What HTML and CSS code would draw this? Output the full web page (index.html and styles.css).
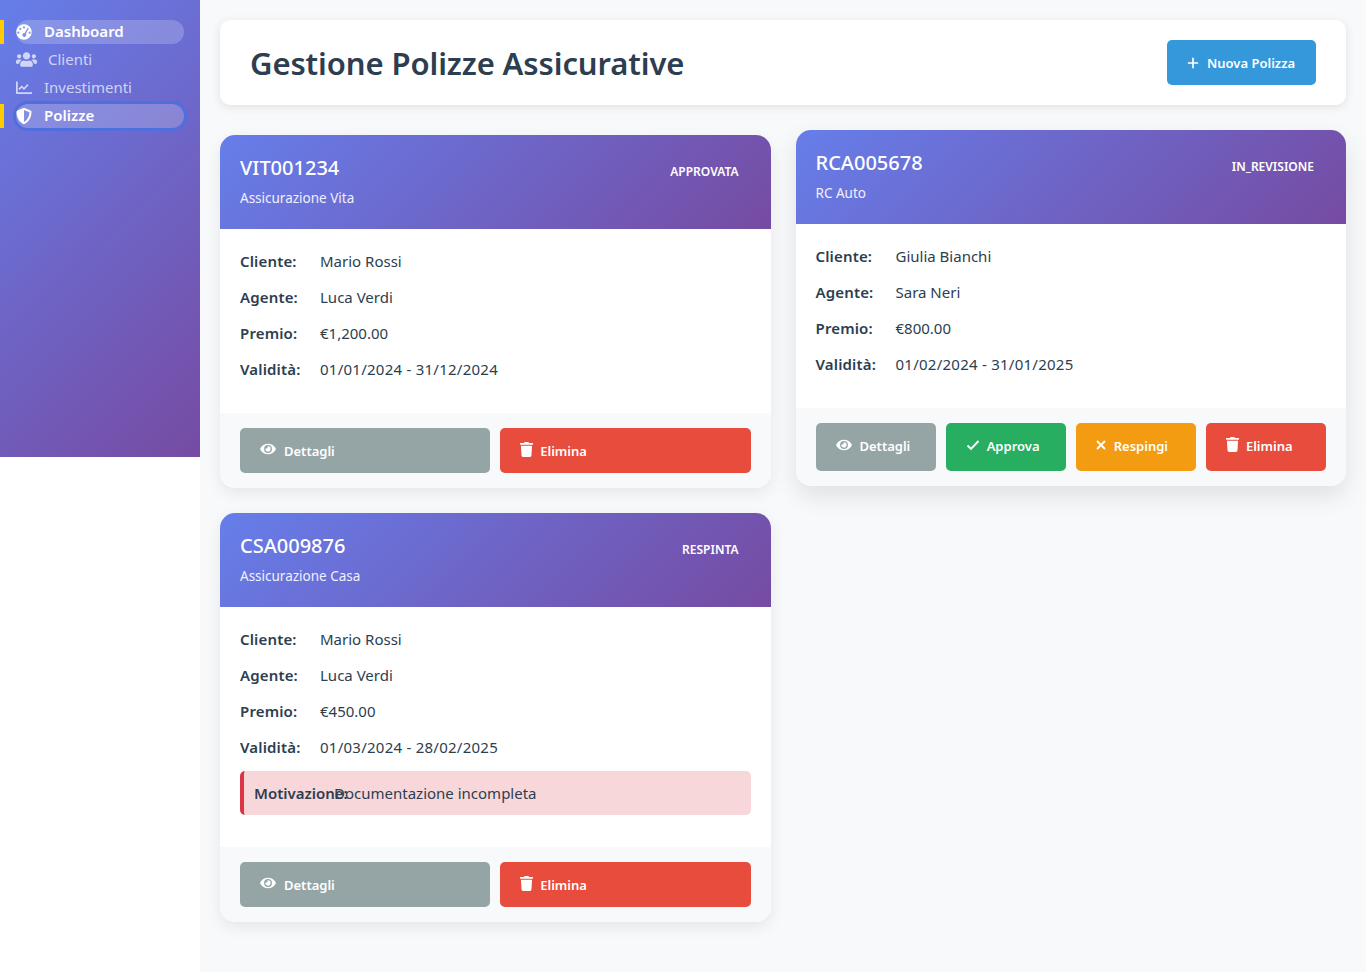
FILE: index.html
```html
<!DOCTYPE html>
<html lang="it">
<head>
<meta charset="utf-8">
<title>Gestione Polizze Assicurative</title>
<link rel="stylesheet" href="styles.css">
</head>
<body>
<svg class="defs" width="0" height="0" aria-hidden="true">
  <symbol id="i-eye" viewBox="0 0 576 512"><path d="M572.52 241.4C518.29 135.59 410.93 64 288 64S57.68 135.64 3.48 241.41a32.35 32.35 0 0 0 0 29.19C57.71 376.41 165.07 448 288 448s230.32-71.64 284.52-177.41a32.35 32.35 0 0 0 0-29.19zM288 400a144 144 0 1 1 144-144 143.93 143.93 0 0 1-144 144zm0-240a95.31 95.31 0 0 0-25.31 3.79 47.85 47.85 0 0 1-66.9 66.9A95.78 95.78 0 1 0 288 160z"/></symbol>
  <symbol id="i-trash" viewBox="0 0 448 512"><path d="M432 32H312l-9.4-18.7A24 24 0 0 0 281.1 0H166.8a23.72 23.72 0 0 0-21.4 13.3L136 32H16A16 16 0 0 0 0 48v32a16 16 0 0 0 16 16h416a16 16 0 0 0 16-16V48a16 16 0 0 0-16-16zM53.2 467a48 48 0 0 0 47.9 45h245.8a48 48 0 0 0 47.9-45L416 128H32z"/></symbol>
  <symbol id="i-check" viewBox="0 0 14 14"><path class="thin" d="M1.5 7.5l3.5 3.5 7.5-8"/></symbol>
  <symbol id="i-times" viewBox="0 0 10 14"><path class="thin" d="M1 3l8 8M9 3l-8 8"/></symbol>
</svg>
<div class="app">
  <aside class="sidebar">
    <nav class="nav">
      <a class="nav-item active">
        <svg class="nav-icon" viewBox="0 0 512 512"><path fill-rule="evenodd" d="M256 8a248 248 0 1 0 0 496 248 248 0 0 0 0-496zM256 72a36 36 0 1 1 0 72 36 36 0 0 1 0-72zM136 120a36 36 0 1 1 0 72 36 36 0 0 1 0-72zM76 240a36 36 0 1 1 0 72 36 36 0 0 1 0-72zM376 116l36 22-96 170a64 64 0 1 1-40-22zM436 240a36 36 0 1 1 0 72 36 36 0 0 1 0-72z"/></svg>
        <span class="nav-label">Dashboard</span>
      </a>
      <a class="nav-item">
        <svg class="nav-icon wide" viewBox="0 0 640 512"><path d="M96 224c35.3 0 64-28.7 64-64s-28.7-64-64-64-64 28.7-64 64 28.7 64 64 64zm448 0c35.3 0 64-28.7 64-64s-28.7-64-64-64-64 28.7-64 64 28.7 64 64 64zm32 32h-64c-17.6 0-33.5 7.1-45.1 18.6 40.3 22.1 68.9 62 75.1 109.4h66c17.7 0 32-14.3 32-32v-32c0-35.3-28.7-64-64-64zm-256 0c61.9 0 112-50.1 112-112S381.9 32 320 32 208 82.1 208 144s50.1 112 112 112zm76.8 32h-8.3c-20.8 10-43.9 16-68.5 16s-47.6-6-68.5-16h-8.3C179.6 288 128 339.6 128 403.2V432c0 26.5 21.5 48 48 48h288c26.5 0 48-21.5 48-48v-28.8c0-63.6-51.6-115.2-115.2-115.2zm-223.7-13.4C161.5 263.1 145.6 256 128 256H64c-35.3 0-64 28.7-64 64v32c0 17.7 14.3 32 32 32h65.9c6.3-47.4 34.9-87.3 75.2-109.4z"/></svg>
        <span class="nav-label">Clienti</span>
      </a>
      <a class="nav-item">
        <svg class="nav-icon" viewBox="0 0 512 512"><path d="M512 392v56H32a32 32 0 0 1-32-32V48h56v344zM112 320l-38-38 110-110 72 72 108-116 38 38-146 154-72-72z"/></svg>
        <span class="nav-label">Investimenti</span>
      </a>
      <a class="nav-item active focused">
        <svg class="nav-icon" viewBox="0 0 512 512"><path d="M466.5 83.7l-192-80a48.15 48.15 0 0 0-36.9 0l-192 80C27.7 91.1 16 108.6 16 128c0 198.5 114.5 335.7 221.5 380.3 11.8 4.9 25.1 4.9 36.9 0C360.1 472.6 496 349.3 496 128c0-19.4-11.7-36.9-29.5-44.3zM256.1 446.3l-.1-381 175.9 73.3c-3.3 151.4-82.1 261.1-175.8 307.7z"/></svg>
        <span class="nav-label">Polizze</span>
      </a>
    </nav>
  </aside>
  <main class="main">
    <header class="page-header">
      <h1 class="page-title">Gestione Polizze Assicurative</h1>
      <button class="btn btn-blue btn-new">
        <svg class="btn-icon" viewBox="0 0 14 14"><path d="M6 1h2v5h5v2H8v5H6V8H1V6h5z"/></svg>
        <span>Nuova Polizza</span>
      </button>
    </header>
    <section class="grid">
      <article class="card">
        <div class="card-head">
          <div><h2 class="card-id">VIT001234</h2><p class="card-type">Assicurazione Vita</p></div>
          <span class="status">APPROVATA</span>
        </div>
        <div class="card-body">
          <div class="row"><b>Cliente:</b><span>Mario Rossi</span></div>
          <div class="row"><b>Agente:</b><span>Luca Verdi</span></div>
          <div class="row"><b>Premio:</b><span>€1,200.00</span></div>
          <div class="row"><b>Validità:</b><span class="date">01/01/2024 - 31/12/2024</span></div>
        </div>
        <div class="card-foot">
          <button class="btn btn-grey"><svg class="btn-icon eye"><use href="#i-eye"/></svg><span>Dettagli</span></button>
          <button class="btn btn-red"><svg class="btn-icon trash"><use href="#i-trash"/></svg><span>Elimina</span></button>
        </div>
      </article>
      <article class="card lifted">
        <div class="card-head">
          <div><h2 class="card-id">RCA005678</h2><p class="card-type">RC Auto</p></div>
          <span class="status">IN_REVISIONE</span>
        </div>
        <div class="card-body">
          <div class="row"><b>Cliente:</b><span>Giulia Bianchi</span></div>
          <div class="row"><b>Agente:</b><span>Sara Neri</span></div>
          <div class="row"><b>Premio:</b><span>€800.00</span></div>
          <div class="row"><b>Validità:</b><span class="date">01/02/2024 - 31/01/2025</span></div>
        </div>
        <div class="card-foot tall">
          <button class="btn btn-grey"><svg class="btn-icon eye"><use href="#i-eye"/></svg><span>Dettagli</span></button>
          <button class="btn btn-green"><svg class="btn-icon check"><use href="#i-check"/></svg><span>Approva</span></button>
          <button class="btn btn-orange"><svg class="btn-icon times"><use href="#i-times"/></svg><span>Respingi</span></button>
          <button class="btn btn-red"><svg class="btn-icon trash"><use href="#i-trash"/></svg><span>Elimina</span></button>
        </div>
      </article>
      <article class="card">
        <div class="card-head">
          <div><h2 class="card-id">CSA009876</h2><p class="card-type">Assicurazione Casa</p></div>
          <span class="status">RESPINTA</span>
        </div>
        <div class="card-body">
          <div class="row"><b>Cliente:</b><span>Mario Rossi</span></div>
          <div class="row"><b>Agente:</b><span>Luca Verdi</span></div>
          <div class="row"><b>Premio:</b><span>€450.00</span></div>
          <div class="row"><b>Validità:</b><span class="date">01/03/2024 - 28/02/2025</span></div>
          <div class="reason"><b>Motivazione:</b><span>Documentazione incompleta</span></div>
        </div>
        <div class="card-foot">
          <button class="btn btn-grey"><svg class="btn-icon eye"><use href="#i-eye"/></svg><span>Dettagli</span></button>
          <button class="btn btn-red"><svg class="btn-icon trash"><use href="#i-trash"/></svg><span>Elimina</span></button>
        </div>
      </article>
    </section>
  </main>
</div>
</body>
</html>
```
FILE: styles.css
```css
* { box-sizing: border-box; }
html, body { margin: 0; padding: 0; background: #fff; }
body { font-family: "Noto Sans", "Open Sans", sans-serif; color: #2c3e50; }
.defs { position: absolute; }
.app { display: flex; align-items: flex-start; min-height: 972px; }

.sidebar {
  width: 200px;
  height: 457px;
  flex: none;
  padding-top: 20px;
  background: linear-gradient(135deg, #667eea 0%, #764ba2 100%);
}
.nav { display: flex; flex-direction: column; gap: 4px; }
.nav-item {
  position: relative;
  display: flex;
  align-items: center;
  height: 24px;
  margin: 0 16px;
  border-radius: 12px;
  font-size: 15px;
  color: rgba(255, 255, 255, 0.7);
}
.nav-label { margin-top: -2px; }
.nav-item.active { color: #fff; font-weight: 600; background: rgba(255, 255, 255, 0.2); }
.nav-item.active::before {
  content: "";
  position: absolute;
  left: -16px;
  top: 0;
  width: 4px;
  height: 24px;
  background: #ffcc00;
}
.nav-item.focused { box-shadow: 0 0 0 3px #4f6fdf; }
.nav-icon { width: 16px; height: 16px; margin-right: 12px; flex: none; fill: currentColor; }
.nav-icon.wide { width: 21px; height: 19px; margin-right: 11px; margin-top: -2px; }

.main { flex: 1; min-width: 0; min-height: 972px; padding: 20px; background: #f8f9fa; }
.page-header {
  display: flex;
  align-items: center;
  justify-content: space-between;
  height: 85px;
  padding: 0 30px;
  margin-bottom: 30px;
  background: #fff;
  border-radius: 10px;
  box-shadow: 0 2px 10px rgba(0, 0, 0, 0.1);
}
.page-title { margin: 0; font-size: 31px; letter-spacing: -0.1px; font-weight: 600; color: #2c3e50; }

.grid { display: grid; grid-template-columns: 1fr 1fr; column-gap: 25px; row-gap: 22px; align-items: start; }
.card { background: #fff; border-radius: 15px; overflow: hidden; box-shadow: 0 5px 15px rgba(0, 0, 0, 0.08); }
.card.lifted { transform: translateY(-5px); box-shadow: 0 10px 25px rgba(0, 0, 0, 0.1); }
.card-head {
  display: flex;
  justify-content: space-between;
  align-items: flex-start;
  height: 94px;
  padding: 19px 20px;
  color: #fff;
  background: linear-gradient(135deg, #667eea 0%, #764ba2 100%);
}
.card-id { margin: 0 0 8px; font-size: 20px; line-height: 27px; font-weight: 500; }
.card-type { margin: 0; font-size: 13.5px; line-height: 18px; opacity: 0.9; }
.status { padding: 10px 12px; font-size: 12px; line-height: 16px; font-weight: 600; }

.card-body { padding: 14px 20px 26px; font-size: 15px; }
.row { display: flex; height: 36px; align-items: center; }
.row b { width: 80px; flex: none; font-weight: 600; letter-spacing: 0.15px; }
.date { letter-spacing: 0.25px; }
.reason {
  display: flex;
  align-items: center;
  height: 44px;
  margin-top: 6px;
  margin-bottom: 6px;
  padding-left: 10px;
  background: #f8d7da;
  border-left: 4px solid #dc3545;
  border-radius: 5px;
}
.reason b { width: 80px; flex: none; font-weight: 600; white-space: nowrap; }

.card-foot { display: flex; gap: 10px; padding: 15px 20px; background: #f8f9fa; }
.btn {
  display: flex;
  align-items: center;
  flex: 1;
  height: 45px;
  padding: 0 20px;
  border: 0;
  border-radius: 5px;
  color: #fff;
  font-family: inherit;
  font-size: 13px;
  font-weight: 600;
}
.card-foot.tall .btn { height: 48px; padding-bottom: 2px; }
.btn-new { flex: none; width: 149px; }
.btn-blue { background: #3498db; }
.btn-grey { background: #95a5a6; }
.btn-red { background: #e74c3c; }
.btn-green { background: #27ae60; }
.btn-orange { background: #f39c12; }
.btn-icon { width: 12px; height: 12px; margin-right: 8px; flex: none; fill: currentColor; }
.btn-icon.eye { width: 16px; height: 14px; margin-top: -3px; }
.btn-icon.trash { width: 13px; height: 15px; margin-top: -3px; margin-right: 7px; }
.btn-icon.check { width: 14px; height: 14px; margin-top: -3px; margin-right: 7px; }
.btn-icon.times { width: 10px; height: 14px; margin-top: -3px; }
.thin { fill: none; stroke: currentColor; stroke-width: 1.9; }
```
